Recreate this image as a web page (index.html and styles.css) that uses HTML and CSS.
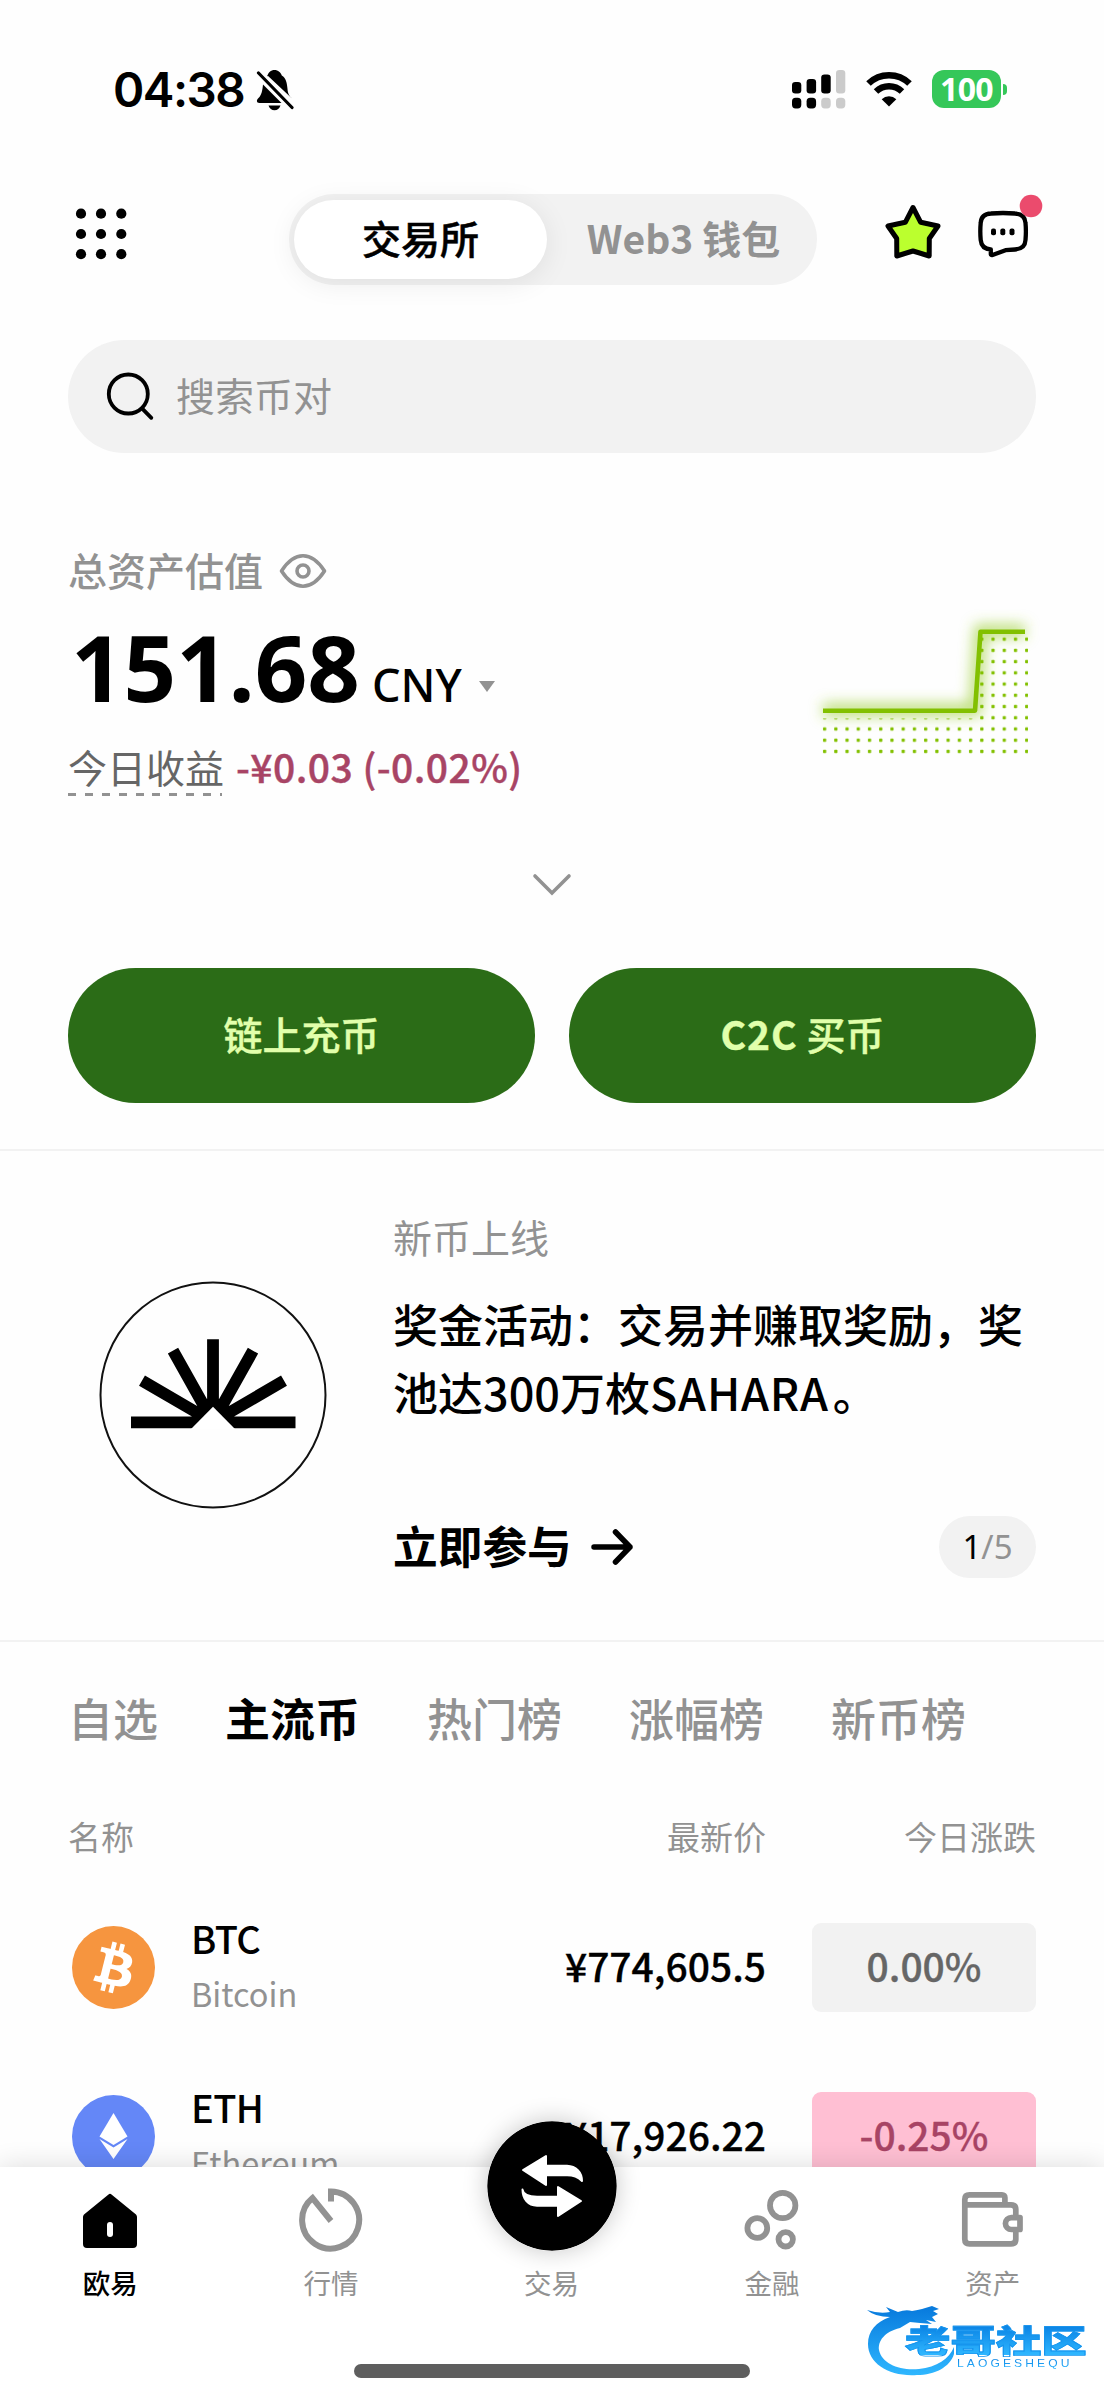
FILE: index.html
```html
<!DOCTYPE html>
<html lang="zh-CN">
<head>
<meta charset="utf-8">
<title>欧易</title>
<link rel="stylesheet" href="styles.css">
</head>
<body>
<div class="phone">
  <div class="status">
    <span class="clock">04:38</span>
    <svg class="bell" width="38" height="42" viewBox="0 0 38 42">
      <path d="M11 8C12 3.500 15 1 18.500 1s6.500 2.500 7.300 5.500C30 9 31 14 31.500 20c.3 5 2 7 4.500 9.500L11 6z"/>
      <path d="M7 15.500L25.500 34H3.500C0 34 .5 30.500 2.500 29 5.500 26.500 6.500 21 7 15.500z"/>
      <path d="M12.500 36.500h12c-1 3.200-3.200 4.700-6 4.700s-5-1.500-6-4.700z"/>
      <path d="M2.500 4l33.500 34.500" fill="none" stroke="#fefefe" stroke-width="7"/>
      <path d="M2.500 4l33.500 34.500" fill="none" stroke="#000" stroke-width="3.200" stroke-linecap="round"/>
    </svg>
    <svg class="signal" width="54" height="40" viewBox="0 0 54 40">
      <rect x="0" y="13" width="9.300" height="11.500" rx="3.300"/>
      <rect x="14.600" y="10" width="9.500" height="14.500" rx="3.300"/>
      <rect x="29.200" y="5.500" width="9.500" height="19" rx="3.300"/>
      <rect x="44" y="1" width="9.300" height="23.500" rx="3.300" fill="#cbcbcb"/>
      <rect x="0" y="28.800" width="9.300" height="10.600" rx="3.600"/>
      <rect x="14.600" y="28.800" width="9.500" height="10.600" rx="3.600"/>
      <rect x="29.200" y="28.800" width="9.500" height="10.600" rx="3.600" fill="#cbcbcb"/>
      <rect x="44" y="28.800" width="9.300" height="10.600" rx="3.600" fill="#cbcbcb"/>
    </svg>
    <svg class="wifi" width="46" height="36" viewBox="0 0 46 36">
      <path d="M2.500 12.500a29.500 29.500 0 0 1 41 0" fill="none" stroke="#000" stroke-width="6.500"/>
      <path d="M10 20.500a19 19 0 0 1 26 0" fill="none" stroke="#000" stroke-width="6.500"/>
      <path d="M15.700 28.300a10.500 10.500 0 0 1 14.600 0L23 35.500z"/>
    </svg>
    <span class="battery">100</span>
    <i class="battery-tip"></i>
  </div>

  <header class="topbar">
    <svg class="grid-icon" width="54" height="54" viewBox="0 0 54 54">
      <circle cx="7" cy="6.700" r="5.100"/><circle cx="27" cy="6.700" r="5.100"/><circle cx="47.300" cy="6.700" r="5.100"/>
      <circle cx="7" cy="27" r="5.100"/><circle cx="27" cy="27" r="5.100"/><circle cx="47.300" cy="27" r="5.100"/>
      <circle cx="7" cy="47.200" r="5.100"/><circle cx="27" cy="47.200" r="5.100"/><circle cx="47.300" cy="47.200" r="5.100"/>
    </svg>
    <div class="switch">
      <span class="switch-on">交易所</span>
      <span class="switch-off">Web3 钱包</span>
    </div>
    <svg class="star" width="60" height="60" viewBox="0 0 60 60">
      <path d="M30 7.500L37.700 22.300L55 26L46.300 38.500L46.200 56L30 51L13.800 56L13.700 38.500L5 26L22.300 22.300Z" fill="#bbff2e" stroke="#000" stroke-width="5" stroke-linejoin="round"/>
    </svg>
    <svg class="chat" width="70" height="70" viewBox="0 0 70 70">
      <path d="M13 20.500Q25 19.500 37 20.500Q47 21 47.500 30Q48.300 38 47.500 47Q47 56 37 56.500Q30 57 27.500 57.200L14.500 62Q12.800 62.500 12.800 61V56.300Q3.500 56 2.700 47Q1.900 38 2.700 30Q3.200 21 13 20.500Z" fill="none" stroke="#000" stroke-width="4.300" stroke-linejoin="round"/>
      <rect x="13" y="35.500" width="5" height="6.700" rx="2"/><rect x="22.300" y="35.500" width="5" height="6.700" rx="2"/><rect x="31.500" y="35.500" width="5" height="6.700" rx="2"/>
      <circle cx="53" cy="13" r="11.300" fill="#eb4b6d"/>
    </svg>
  </header>

  <div class="search">
    <svg width="50" height="50" viewBox="0 0 50 50" fill="none" stroke="#000" stroke-width="3.800" stroke-linecap="round">
      <circle cx="22.300" cy="22" r="19.500"/><path d="M36 36.300l9.300 9.500"/>
    </svg>
    <span>搜索币对</span>
  </div>

  <section class="assets">
    <div class="figures">
      <div class="caption"><span>总资产估值</span>
        <svg width="48" height="36" viewBox="0 0 48 36" fill="none" stroke="#929292" stroke-width="3.600" stroke-linejoin="round">
          <path d="M2.500 18C9 8 16 2.800 24 2.800S39 8 45.500 18C39 28 32 33.200 24 33.200S9 28 2.500 18z"/><circle cx="24" cy="18" r="6"/>
        </svg>
      </div>
      <div class="total"><b>151.68</b><span>CNY</span><i></i></div>
      <div class="profit"><span class="dashed">今日收益</span><span class="loss">-¥0.03 (-0.02%)</span></div>
    </div>
    <svg class="chart" width="250" height="170" viewBox="0 0 250 170">
      <defs>
        <pattern id="dots" x="32" y="34" width="11.230" height="11.230" patternUnits="userSpaceOnUse"><rect x="1" y="3.500" width="3.200" height="3.200" rx=".6" fill="#82c000"/></pattern>
        <filter id="glow" x="-20%" y="-40%" width="140%" height="180%"><feGaussianBlur stdDeviation="7"/></filter>
      </defs>
      <path d="M33 110.700H185L190.500 31.700H235" transform="translate(0 -1)" fill="none" stroke="#9fd03a" stroke-opacity=".75" stroke-width="12" filter="url(#glow)"/>
      <path d="M32 118.500H186V34H238V155H32z" fill="url(#dots)"/>
      <path d="M33 110.700H185L190.500 31.700H235" fill="none" stroke="#82c000" stroke-width="4.600" stroke-linejoin="round"/>
    </svg>
  </section>

  <svg class="expand" width="40" height="24" viewBox="0 0 40 24" fill="none" stroke="#929292" stroke-width="3.600" stroke-linecap="round"><path d="M3 3L20 20L37 3"/></svg>

  <div class="actions">
    <span class="action">链上充币</span>
    <span class="action"><b>C2C</b> 买币</span>
  </div>

  <section class="promo">
    <svg class="promo-logo" width="230" height="230" viewBox="0 0 230 230">
      <circle cx="115" cy="115" r="112.500" fill="none" stroke="#111" stroke-width="2"/>
      <g fill="none" stroke="#000" stroke-width="11.800">
        <path d="M115 142V59.300M115 142L75 70.700M115 142L155 70.700M115 142L44 100.700M115 142L186 100.700M33 142.300H197.500"/>
      </g>
      <path d="M115 126.700L137 149H93z" fill="#fff"/>
    </svg>
    <div class="promo-body">
      <div class="promo-kind">新币上线</div>
      <div class="promo-title">奖金活动：交易并赚取奖励，奖<br>池达300万枚<em>SAHARA</em>。</div>
      <div class="promo-foot">
        <span class="join">立即参与</span>
        <svg width="44" height="38" viewBox="0 0 44 38" fill="none" stroke="#000" stroke-width="5.500" stroke-linecap="round" stroke-linejoin="round"><path d="M4 19H40M25.500 4L40 19L25.500 34"/></svg>
        <span class="page"><b>1</b>/5</span>
      </div>
    </div>
  </section>

  <nav class="tabs"><span>自选</span><span class="tab-on">主流币</span><span>热门榜</span><span>涨幅榜</span><span>新币榜</span></nav>

  <div class="market">
    <div class="row head"><span class="col-name">名称</span><span class="col-price">最新价</span><span class="col-change">今日涨跌</span></div>
    <div class="row">
      <svg class="coin" width="83" height="83" viewBox="0 0 32 32">
        <circle cx="16" cy="16" r="16" fill="#f6953f"/>
        <path fill="#fff" d="M23.189 14.020c.314-2.096-1.283-3.223-3.465-3.975l.708-2.840-1.728-.43-.690 2.765c-.454-.114-.920-.220-1.385-.326l.695-2.783L15.596 6l-.708 2.839c-.376-.086-.746-.170-1.104-.260l.002-.009-2.384-.595-.460 1.846s1.283.294 1.256.312c.700.175.826.638.805 1.006l-.806 3.235c.048.012.110.030.180.057l-.183-.045-1.130 4.532c-.086.212-.303.531-.793.410.018.025-1.256-.313-1.256-.313l-.858 1.978 2.250.561c.418.105.828.215 1.231.318l-.715 2.872 1.727.430.708-2.840c.472.127.930.245 1.378.357l-.706 2.828 1.728.430.715-2.866c2.948.558 5.164.333 6.097-2.333.752-2.146-.037-3.385-1.588-4.192 1.130-.260 1.980-1.003 2.207-2.538zm-3.950 5.538c-.533 2.147-4.148.986-5.320.695l.950-3.805c1.172.293 4.929.872 4.370 3.110zm.535-5.569c-.487 1.953-3.495.960-4.470.717l.860-3.450c.975.243 4.118.696 3.610 2.733z"/>
      </svg>
      <div class="col-name"><div class="sym">BTC</div><div class="full">Bitcoin</div></div>
      <span class="col-price">¥774,605.5</span><span class="chip">0.00%</span>
    </div>
    <div class="row">
      <svg class="coin" width="83" height="83" viewBox="0 0 83 83">
        <circle cx="41.500" cy="41.500" r="41.500" fill="#6487f7"/>
        <path fill="#fff" d="M41.500 18L55.500 41.500L41.500 50L27.500 41.500Z"/><path fill="#fff" d="M27.500 44L41.500 52.500L55.500 44L41.500 64Z"/>
      </svg>
      <div class="col-name"><div class="sym">ETH</div><div class="full">Ethereum</div></div>
      <span class="col-price">¥17,926.22</span><span class="chip chip-down">-0.25%</span>
    </div>
  </div>

  <footer class="navbar">
    <div class="nav-items">
      <div class="nav nav-on">
        <svg width="66" height="66" viewBox="0 0 66 66"><path d="M31.500 7.500q1.500-1.500 3 0L59 27.500q1 1 1 2.500V57q0 4-4 4H10q-4 0-4-4V30q0-1.500 1-2.500z"/><rect x="30" y="35" width="6" height="15" rx="3" fill="#fff"/></svg>
        <span>欧易</span>
      </div>
      <div class="nav">
        <svg width="66" height="66" viewBox="0 0 66 66" fill="none" stroke="#929292" stroke-width="6"><path d="M33 14.500V4.500A28.500 28.500 0 1 1 14.500 11L33 34" stroke-linejoin="miter"/></svg>
        <span>行情</span>
      </div>
      <div class="nav">
        <svg class="swap" width="130" height="130" viewBox="0 0 130 130"><circle cx="65" cy="65" r="64.700"/>
          <g fill="#fff" stroke="#fff" stroke-width="2" stroke-linejoin="round"><path d="M36 49L59 35V44.700H80C89 45 95 51 95 60C91 56 86 54.300 80 54.300H59V64Z"/><path d="M94 80L71 66V75.700H50C41 75.500 36 73 35.500 68.500C35.500 78 41 84.500 50 84.700H71V95Z"/></g>
        </svg>
        <span>交易</span>
      </div>
      <div class="nav">
        <svg width="66" height="66" viewBox="0 0 66 66" fill="none" stroke="#929292" stroke-width="5.800"><circle cx="43.700" cy="18.500" r="12.700"/><circle cx="18.300" cy="41" r="9.900"/><circle cx="46.700" cy="52.300" r="7.200"/></svg>
        <span>金融</span>
      </div>
      <div class="nav">
        <svg width="66" height="66" viewBox="0 0 66 66" fill="none" stroke="#929292" stroke-width="5.700" stroke-linejoin="round"><path d="M44.900 18V10.700Q44.900 7.900 42 7.900H9.500Q4.800 7.900 4.800 12.500V52.300Q4.800 56.900 9.500 56.900H51Q55.800 56.900 55.800 52.300V42.500M55.800 30.600V22.500Q55.800 17.900 51 17.900H5"/><path d="M60 30.600V42.500H51.400A5.950 5.950 0 0 1 51.400 30.600Z"/></svg>
        <span>资产</span>
      </div>
    </div>
    <div class="home-bar"></div>
  </footer>

  <div class="mark">
    <svg width="90" height="76" viewBox="0 0 90 76">
      <defs><linearGradient id="blue" x1="0" y1="0" x2="0" y2="1"><stop offset="0" stop-color="#0779dc"/><stop offset="1" stop-color="#2fb7ff"/></linearGradient></defs>
      <path fill="url(#blue)" d="M1 8Q13 12 24 10L20 5L32 10Q40 7 46 9Q52 8 56 7L66 4L73 7L67 9L72 12L66 15L70 20L60 18L66 22L54 21L44 20L34 26C18 30 12 39 13 48C16 62 34 69 53 67C71 65 83 57 88 45L88 52C84 65 69 73 51 73C24 75 2 62 2 42C2 29 10 20 24 15Q9 15 1 8z"/>
    </svg>
    <div class="mark-cn">老哥社区</div>
    <div class="mark-en">LAOGESHEQU</div>
  </div>
</div>
</body>
</html>
```
FILE: styles.css
```css
* { box-sizing: border-box; }
body { margin: 0; background: #fefefe; color: #000; font-family: "Noto Sans CJK SC", sans-serif; font-size: 39px; line-height: 1; }
svg { display: block; flex: none; }
i, em { font-style: normal; }
.phone { position: relative; width: 1104px; height: 2400px; overflow: hidden; display: flex; flex-direction: column; background: #fefefe; white-space: nowrap; }

.status { height: 178px; flex: none; display: flex; align-items: center; padding-left: 113px; }
.clock { font: 600 47.500px/1 Inter, sans-serif; width: 143px; letter-spacing: -1.500px; padding-top: 2px; }
.bell { margin-top: 2px; }
.signal { margin-left: 498px; }
.wifi { margin-left: 20px; }
.battery { margin-left: 20px; width: 69px; height: 38px; border-radius: 12px; background: #35c759; color: #fff; font: 700 32px/38px "Noto Sans", sans-serif; text-align: center; letter-spacing: -.7px; }
.battery-tip { width: 4px; height: 11px; margin-left: 2px; border-radius: 0 5px 5px 0; background: #35c759; }

.topbar { height: 123px; flex: none; display: flex; align-items: center; padding-left: 74px; }
.grid-icon { margin-top: -11px; }
.switch { margin-left: 161px; width: 528px; height: 91px; border-radius: 46px; background: #f2f2f2; padding: 5px; display: flex; align-items: center; font-weight: 500; }
.switch-on { width: 253px; height: 79px; line-height: 74px; border-radius: 40px; background: #fff; text-align: center; box-shadow: 0 4px 28px rgba(0,0,0,.08); -webkit-text-stroke: .5px; }
.switch-off { flex: 1; text-align: center; color: #929292; font-weight: 700; padding: 0 0 5px 8px; }
.star { margin: -19px 0 0 66px; }
.chat { margin: -24px 0 0 35px; }

.search { margin: 39px 68px 0; height: 113px; flex: none; border-radius: 57px; background: #f2f2f2; display: flex; align-items: center; gap: 20px; padding-left: 38px; color: #929292; }
.search span { padding-bottom: 5px; }

.assets { height: 350px; flex: none; display: flex; justify-content: space-between; padding: 98px 64px 0 68px; }
.caption { height: 40px; display: flex; align-items: center; gap: 16px; color: #929292; font-weight: 500; }
.caption span { padding-bottom: 3px; }
.total { display: flex; align-items: baseline; margin: 28px 0 0 3px; height: 96px; line-height: 96px; font-family: "Noto Sans", sans-serif; }
.total b { font-size: 92px; letter-spacing: 0; }
.total span { margin-left: 12px; font-size: 45px; font-weight: 500; }
.total i { margin-left: 17px; align-self: center; margin-top: 38px; border: 8px solid transparent; border-top: 11px solid #929292; border-bottom: 0; }
.profit { display: flex; margin-top: 32px; }
.dashed { height: 49px; width: 154px; margin-right: 14px; color: #666; background: repeating-linear-gradient(90deg, #929292 0 8px, transparent 8px 16.900px) 0 100% / 100% 3px no-repeat; }
.loss { color: #a84465; font-weight: 500; letter-spacing: .45px; -webkit-text-stroke: .4px; }
.chart { margin-top: 49px; }

.expand { margin: 70px auto 0 532px; }
.actions { display: flex; gap: 34px; padding: 71px 68px 46px; height: 254px; flex: none; border-bottom: 2px solid #f2f2f2; }
.action { flex: 1; line-height: 131px; border-radius: 68px; background: #2b6c17; color: #e1ffab; text-align: center; font-weight: 500; -webkit-text-stroke: .4px; }
.action b { font-weight: 700; letter-spacing: 1px; }

.promo { height: 491px; flex: none; border-bottom: 2px solid #f2f2f2; display: flex; padding-left: 98px; }
.promo-logo { margin-top: 129px; }
.promo-body { margin-left: 65px; width: 643px; padding-top: 66px; }
.promo-kind { color: #929292; }
.promo-title { margin-top: 34px; font-size: 45px; line-height: 67.500px; font-weight: 500; }
.promo-title em { letter-spacing: .8px; margin-right: 4px; }
.promo-foot { display: flex; align-items: center; height: 62px; margin-top: 91px; font-size: 44.700px; font-weight: 700; }
.promo-foot svg { margin-left: 18px; }
.join { padding-bottom: 4px; }
.page { margin-left: auto; width: 97px; height: 62px; border-radius: 31px; background: #f2f2f2; color: #929292; text-align: center; font: 400 33px/61px "Noto Sans", sans-serif; }
.page b { color: #000; font-weight: 400; }

.tabs { display: flex; gap: 67px; padding: 53px 68px 0; height: 161px; flex: none; font-size: 45px; color: #929292; font-weight: 500; }
.tab-on { color: #000; font-weight: 700; }

.market { padding: 0 68px; flex: 1; min-height: 0; overflow: hidden; }
.row { display: flex; align-items: center; height: 169px; }
.head { height: 66px; font-size: 33px; color: #929292; margin-bottom: 14px; }
.coin { margin: 0 36px 0 4px; }
.col-name { flex: 1; }
.sym { font-size: 38px; letter-spacing: -.6px; font-weight: 500; margin-top: -6px; }
.full { font-size: 32.500px; letter-spacing: 0; color: #929292; margin-top: 20px; }
.col-price { font-weight: 500; text-align: right; padding-bottom: 4px; -webkit-text-stroke: .3px; }
.head .col-price, .head .col-change { font-weight: 400; padding: 0; -webkit-text-stroke: 0; }
.head .col-change { width: 270px; text-align: right; }
.chip { width: 224px; height: 89px; margin-left: 46px; line-height: 85px; border-radius: 9px; text-align: center; background: #f2f2f2; color: #666; font-weight: 500; -webkit-text-stroke: .3px; }
.chip-down { background: #ffbfd3; color: #a84465; }

.navbar { position: relative; height: 233px; flex: none; background: #fff; box-shadow: 0 0 26px rgba(0,0,0,.14); }
.nav-items { display: flex; padding-top: 20px; }
.nav { width: 220.600px; display: flex; flex-direction: column; align-items: center; gap: 16px; font-size: 27.500px; color: #929292; }
.nav-on { color: #000; font-weight: 500; }
.swap { margin: -66px 0 2px 1px; border-radius: 50%; box-shadow: 0 0 24px rgba(0,0,0,.22); }
.home-bar { width: 396px; height: 14px; border-radius: 7px; background: #5e5e5e; margin: 67px auto 0; }

/* site mark lies over the bottom-right corner */
.mark { position: absolute; left: 866px; top: 2302px; }
.mark-cn, .mark-en { position: absolute; background: linear-gradient(#077ee2, #2fb7ff); -webkit-background-clip: text; background-clip: text; color: transparent; transform-origin: 0 0; }
.mark-cn { left: 39px; top: 21px; font-size: 32px; line-height: 32px; font-weight: 900; transform: scaleX(1.42); -webkit-text-stroke: .8px #1695ee; }
.mark-en { left: 91px; top: 56px; font: 400 11px/11px "Liberation Sans", sans-serif; letter-spacing: 2.800px; transform: scaleX(1.1); }
```
